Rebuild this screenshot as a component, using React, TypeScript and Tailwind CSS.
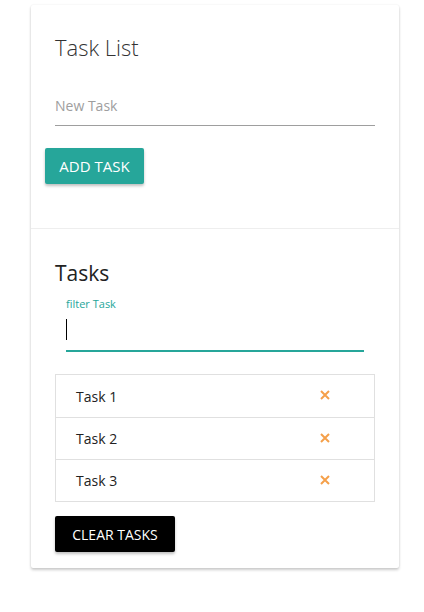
import { useState } from "react"

const tasks = ["Task 1", "Task 2", "Task 3"]

export default function App() {
  const [filter, setFilter] = useState("")

  return (
    <div className="min-h-[612px] bg-white pt-[5px] font-['Open_Sans',sans-serif]">
      <div className="mx-[31px] w-[368px] bg-white shadow-[0_2px_3px_rgba(0,0,0,0.2),0_0_2px_rgba(0,0,0,0.08)] rounded-[2px]">
        <div className="px-[24px] pt-[26px] h-[223px]">
          <h1 className="text-[22px] font-light text-[#333] leading-[32px]">Task List</h1>
          <div className="mt-[30px] w-[320px] border-b border-[#9e9e9e] pb-[8px]">
            <input
              className="w-full outline-none text-[14px] text-[#333] placeholder:text-[#9e9e9e]"
              placeholder="New Task"
            />
          </div>
          <button className="mt-[22px] -ml-[10px] h-[36px] w-[99px] rounded-[2px] bg-[#26a69a] text-[15px] text-white shadow-[0_2px_3px_rgba(0,0,0,0.25)]">
            ADD TASK
          </button>
        </div>
        <div className="border-t border-[#eeeeee] px-[24px] pt-[30px] pb-[16px]">
          <h2 className="text-[21px] text-[#222] leading-[28px]">Tasks</h2>
          <div className="ml-[11px] mt-[9px] w-[298px]">
            <label className="block text-[11px] text-[#26a69a] leading-[16px]">filter Task</label>
            <div className="relative">
              <input
                value={filter}
                onChange={e => setFilter(e.target.value)}
                className="w-full h-[40px] outline-none border-b-2 border-[#26a69a] text-[14px] caret-black"
              />
              {filter === "" && (
                <span className="absolute left-0 top-[7px] h-[21px] w-px bg-black" />
              )}
            </div>
          </div>
          <ul className="mt-[22px] w-[320px] border border-[#e0e0e0]">
            {tasks.map((t, i) => (
              <li
                key={t}
                className={`flex items-center justify-between h-[42px] pl-[20px] pr-[44px] text-[14px] text-[#222] ${i > 0 ? "border-t border-[#e0e0e0]" : ""}`}
              >
                <span>{t}</span>
                <svg width="10" height="10" viewBox="0 0 10 10" className="mb-[2px]">
                  <path d="M1 1 L9 9 M9 1 L1 9" stroke="#f5a04a" strokeWidth="2" />
                </svg>
              </li>
            ))}
          </ul>
          <button className="mt-[14px] h-[36px] w-[120px] rounded-[2px] bg-black text-[14px] text-white shadow-[0_2px_3px_rgba(0,0,0,0.25)]">
            CLEAR TASKS
          </button>
        </div>
      </div>
    </div>
  )
}
